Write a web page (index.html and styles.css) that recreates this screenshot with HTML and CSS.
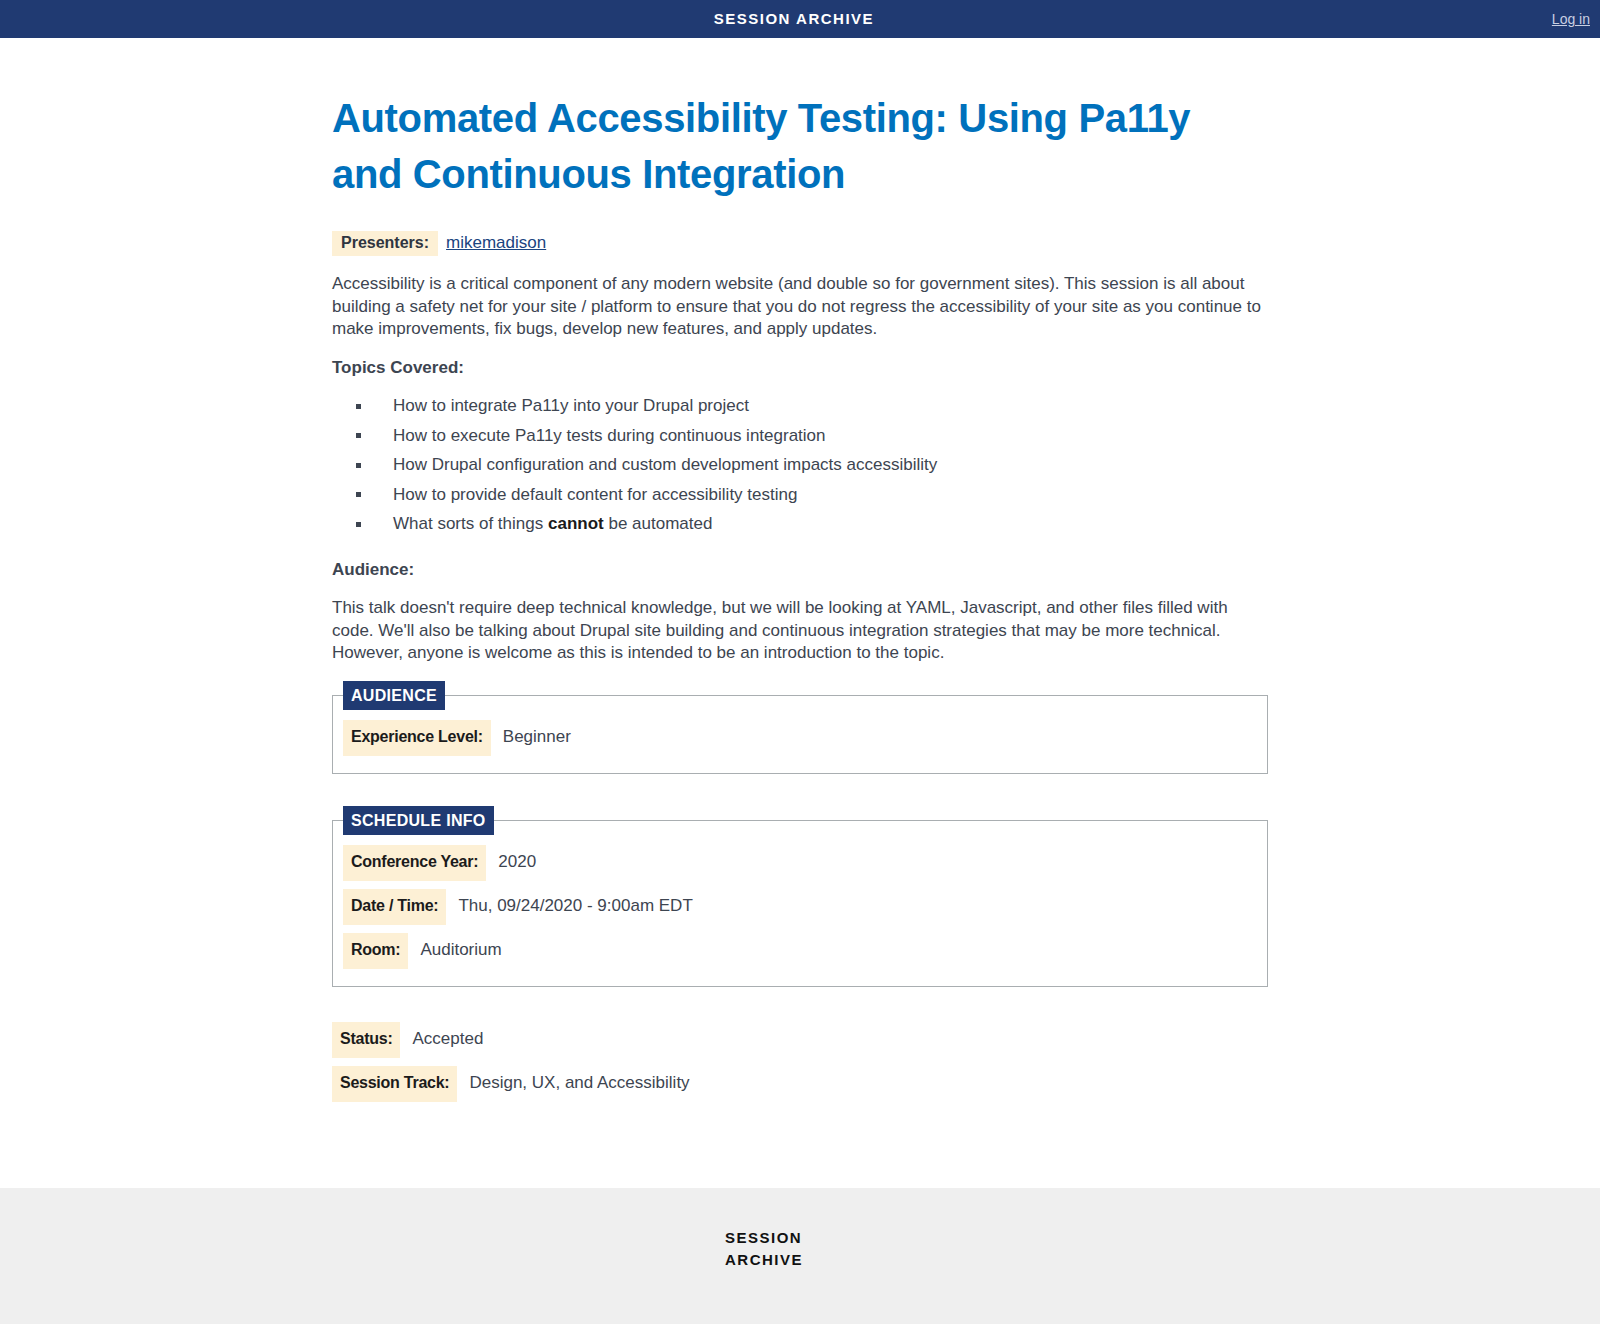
FILE: index.html
```html
<!DOCTYPE html>
<html lang="en">
<head>
<meta charset="utf-8">
<title>Automated Accessibility Testing: Using Pa11y and Continuous Integration | Session Archive</title>
<link rel="stylesheet" href="styles.css">
</head>
<body>
<header class="topbar">
  <div class="site-name">SESSION ARCHIVE</div>
  <a class="login" href="#">Log in</a>
</header>

<main class="content">
  <h1 class="title">Automated Accessibility Testing: Using Pa11y and Continuous Integration</h1>

  <div class="presenters">
    <span class="label label-compact">Presenters:</span>
    <a class="presenter-link" href="#">mikemadison</a>
  </div>

  <p>Accessibility is a critical component of any modern website (and double so for government sites). This session is all about building a safety net for your site / platform to ensure that you do not regress the accessibility of your site as you continue to make improvements, fix bugs, develop new features, and apply updates.</p>

  <p><strong>Topics Covered:</strong></p>

  <ul class="topics">
    <li>How to integrate Pa11y into your Drupal project</li>
    <li>How to execute Pa11y tests during continuous integration</li>
    <li>How Drupal configuration and custom development impacts accessibility</li>
    <li>How to provide default content for accessibility testing</li>
    <li>What sorts of things <strong>cannot</strong> be automated</li>
  </ul>

  <p><strong>Audience:</strong></p>

  <p>This talk doesn't require deep technical knowledge, but we will be looking at YAML, Javascript, and other files filled with code. We'll also be talking about Drupal site building and continuous integration strategies that may be more technical. However, anyone is welcome as this is intended to be an introduction to the topic.</p>

  <fieldset class="group group-first">
    <legend class="group-title">Audience</legend>
    <div class="field">
      <span class="label">Experience Level:</span>
      <span class="value">Beginner</span>
    </div>
  </fieldset>

  <fieldset class="group group-second">
    <legend class="group-title">Schedule Info</legend>
    <div class="field">
      <span class="label">Conference Year:</span>
      <span class="value">2020</span>
    </div>
    <div class="field">
      <span class="label">Date / Time:</span>
      <span class="value">Thu, 09/24/2020 - 9:00am EDT</span>
    </div>
    <div class="field">
      <span class="label">Room:</span>
      <span class="value">Auditorium</span>
    </div>
  </fieldset>

  <div class="extra-fields">
    <div class="field">
      <span class="label">Status:</span>
      <span class="value">Accepted</span>
    </div>
    <div class="field">
      <span class="label">Session Track:</span>
      <span class="value">Design, UX, and Accessibility</span>
    </div>
  </div>
</main>

<footer class="footer">
  <div class="footer-brand">SESSION ARCHIVE</div>
</footer>
</body>
</html>
```

FILE: styles.css
```css
* {
  box-sizing: border-box;
}

html, body {
  margin: 0;
  padding: 0;
}

body {
  font-family: "Liberation Sans", Arial, sans-serif;
  font-size: 17px;
  line-height: 22.5px;
  color: #3d4551;
  background: #ffffff;
}

/* Top bar */
.topbar {
  display: flex;
  align-items: center;
  height: 38px;
  padding: 0 10px 0 36px;
  background: #203a72;
}

.site-name {
  flex: 1;
  text-align: center;
  color: #ffffff;
  font-weight: 700;
  font-size: 15px;
  letter-spacing: 1.5px;
}

.login {
  color: #c8cfe2;
  font-size: 14px;
  text-decoration: underline;
}

/* Main content */
.content {
  width: 936px;
  margin: 0 auto;
  padding: 52px 0 86px;
}

.title {
  margin: 0 0 29px;
  max-width: 900px;
  font-size: 40px;
  line-height: 56px;
  font-weight: 700;
  letter-spacing: -0.35px;
  color: #0071bc;
}

.presenters {
  display: flex;
  align-items: center;
  gap: 8px;
  margin-bottom: 17px;
}

.presenter-link {
  color: #1a4480;
  text-decoration: underline;
}

p {
  margin: 0 0 16px;
}

strong {
  font-weight: 700;
}

.topics {
  list-style: none;
  margin: 0 0 23px;
  padding: 0 0 0 24px;
}

.topics li {
  display: flex;
  align-items: center;
  margin-bottom: 7px;
}

.topics li::before {
  content: "";
  flex: none;
  width: 5px;
  height: 5px;
  margin-right: 32px;
  background: #3d4551;
}

.topics li strong {
  margin: 0 0.28em;
  color: #1b1b1b;
}

/* Labels */
.label {
  display: inline-block;
  padding: 6.75px 8px;
  background: #fdf0d5;
  color: #1b1b1b;
  font-weight: 700;
  font-size: 16px;
  line-height: 22.5px;
  letter-spacing: -0.25px;
}

.label-compact {
  padding: 1.25px 9px;
  letter-spacing: 0;
  color: #2f3540;
}

.value {
  color: #3d4551;
}

.field {
  display: flex;
  align-items: center;
  gap: 12px;
  margin-bottom: 8px;
}

.field:last-child {
  margin-bottom: 0;
}

/* Fieldsets */
.group {
  min-width: 0;
  margin: 0;
  padding: 10px 10px 17px;
  border: 1px solid #a9aeb1;
}

.group-first {
  margin-top: 2px;
}

.group-second {
  margin-top: 32px;
  padding-bottom: 17px;
}

.group-title {
  padding: 0 8px;
  background: #203a72;
  color: #ffffff;
  font-weight: 700;
  font-size: 16px;
  line-height: 29px;
  letter-spacing: 0.3px;
  text-transform: uppercase;
}

.extra-fields {
  margin-top: 35px;
}

/* Footer */
.footer {
  background: #efefef;
  padding: 39px 0 55px;
}

.footer-brand {
  width: 150px;
  margin: 0 auto;
  color: #111111;
  font-weight: 700;
  font-size: 15px;
  line-height: 22px;
  letter-spacing: 1.5px;
}
```
